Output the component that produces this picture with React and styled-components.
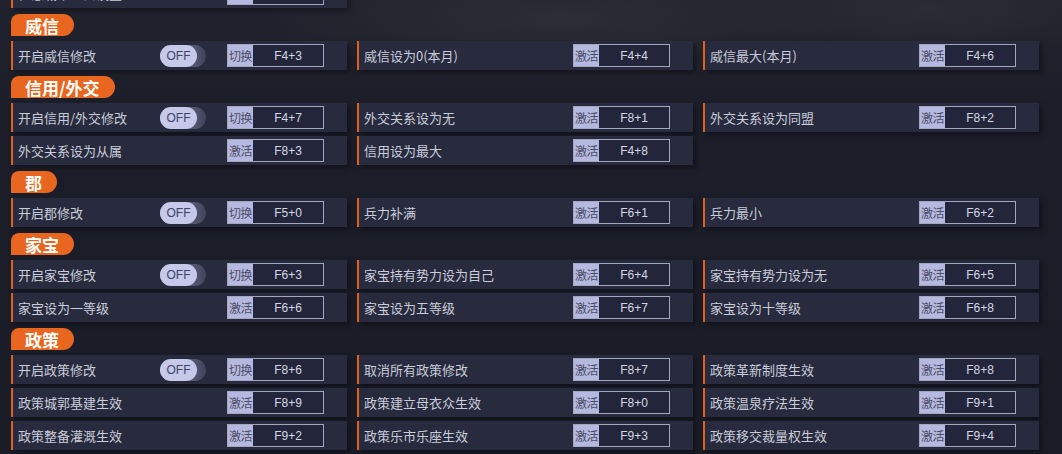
import React from "react";
import styled, { createGlobalStyle } from "styled-components";

const GlobalStyle = createGlobalStyle`
  html, body {
    margin: 0;
    padding: 0;
    background: #1b1d29;
    overflow: hidden;
  }
  body {
    font-family: "Noto Sans CJK SC", "Noto Sans", sans-serif;
    -webkit-font-smoothing: antialiased;
  }
`;

const Page = styled.div`
  width: 1062px;
  height: 454px;
  overflow: hidden;
  background:
    radial-gradient(ellipse 420px 90px at 560px 20px, rgba(70, 66, 70, 0.35), transparent 70%),
    radial-gradient(ellipse 300px 80px at 930px 10px, rgba(80, 76, 70, 0.25), transparent 70%),
    linear-gradient(180deg, #20222d 0%, #1b1d29 30%, #1a1c27 100%);
`;

/* the list is scrolled: the previous section's last row peeks in at the top */
const Scroller = styled.div`
  display: flex;
  flex-direction: column;
  gap: 6px;
  padding-left: 11px;
  margin-top: -21px;
`;

const Section = styled.section`
  display: flex;
  flex-direction: column;
  gap: 5px;
`;

const Tab = styled.div`
  align-self: flex-start;
  height: 22px;
  padding: 0 15px 0 14px;
  display: flex;
  align-items: center;
  background: #e8661f;
  border-radius: 8px 11px 11px 0;
  color: #ffffff;
  font-weight: 700;
  font-size: 17px;
  line-height: 1;
`;

const Grid = styled.div`
  display: grid;
  grid-template-columns: repeat(3, 336px);
  column-gap: 10px;
  row-gap: 4px;
`;

const Row = styled.div`
  height: 29px;
  box-sizing: border-box;
  display: flex;
  align-items: center;
  background: #282b3d;
  border-left: 2px solid #e2601d;
  padding: 0 23px 0 5px;
  box-shadow: 3px 3px 5px rgba(0, 0, 0, 0.35);
`;

const Label = styled.span`
  flex: 1;
  min-width: 0;
  color: #c9ccdb;
  font-size: 13px;
  white-space: nowrap;
  overflow: hidden;
`;

const Toggle = styled.div`
  width: 46px;
  height: 22px;
  margin-right: 21px;
  border-radius: 11px;
  background: linear-gradient(90deg, #6b6f8c 0%, #565a74 70%, #40435a 100%);
  display: flex;
  align-items: center;
`;

const Knob = styled.span`
  width: 37px;
  height: 22px;
  border-radius: 11px;
  background: #c6c9e9;
  color: #3f4566;
  font-family: "Liberation Sans", Arial, sans-serif;
  font-size: 12px;
  display: flex;
  align-items: center;
  justify-content: center;
`;

const KeyBox = styled.div`
  width: 97px;
  height: 23px;
  box-sizing: border-box;
  display: flex;
  border: 1px solid #a3a7bd;
  background: #23263a;
`;

const KeyTag = styled.span`
  width: 25px;
  background: #b5b9df;
  color: #4c4e66;
  font-size: 12px;
  display: flex;
  align-items: center;
  justify-content: center;
  letter-spacing: -0.5px;
`;

const KeyName = styled.span`
  flex: 1;
  display: flex;
  align-items: center;
  justify-content: center;
  color: #d4d6e4;
  font-family: "Liberation Sans", Arial, sans-serif;
  font-size: 12px;
`;

const Empty = styled.div`
  height: 29px;
`;

const sections = [
  {
    title: "威信",
    items: [
      { text: "开启威信修改", toggle: true, key: "F4+3" },
      { text: "威信设为0(本月)", key: "F4+4" },
      { text: "威信最大(本月)", key: "F4+6" },
    ],
  },
  {
    title: "信用/外交",
    items: [
      { text: "开启信用/外交修改", toggle: true, key: "F4+7" },
      { text: "外交关系设为无", key: "F8+1" },
      { text: "外交关系设为同盟", key: "F8+2" },
      { text: "外交关系设为从属", key: "F8+3" },
      { text: "信用设为最大", key: "F4+8" },
    ],
  },
  {
    title: "郡",
    items: [
      { text: "开启郡修改", toggle: true, key: "F5+0" },
      { text: "兵力补满", key: "F6+1" },
      { text: "兵力最小", key: "F6+2" },
    ],
  },
  {
    title: "家宝",
    items: [
      { text: "开启家宝修改", toggle: true, key: "F6+3" },
      { text: "家宝持有势力设为自己", key: "F6+4" },
      { text: "家宝持有势力设为无", key: "F6+5" },
      { text: "家宝设为一等级", key: "F6+6" },
      { text: "家宝设为五等级", key: "F6+7" },
      { text: "家宝设为十等级", key: "F6+8" },
    ],
  },
  {
    title: "政策",
    items: [
      { text: "开启政策修改", toggle: true, key: "F8+6" },
      { text: "取消所有政策修改", key: "F8+7" },
      { text: "政策革新制度生效", key: "F8+8" },
      { text: "政策城郭基建生效", key: "F8+9" },
      { text: "政策建立母衣众生效", key: "F8+0" },
      { text: "政策温泉疗法生效", key: "F9+1" },
      { text: "政策整备灌溉生效", key: "F9+2" },
      { text: "政策乐市乐座生效", key: "F9+3" },
      { text: "政策移交裁量权生效", key: "F9+4" },
    ],
  },
];

function HotkeyRow({ text, toggle, hotkey }) {
  return (
    <Row>
      <Label>{text}</Label>
      {toggle && (
        <Toggle>
          <Knob>OFF</Knob>
        </Toggle>
      )}
      <KeyBox>
        <KeyTag>{toggle ? "切换" : "激活"}</KeyTag>
        <KeyName>{hotkey}</KeyName>
      </KeyBox>
    </Row>
  );
}

export default function App() {
  return (
    <>
      <GlobalStyle />
      <Page>
        <Scroller>
          <Grid>
            <HotkeyRow text="任意城市人口设置" hotkey="F3+9" />
            <Empty />
            <Empty />
          </Grid>
          {sections.map((s) => (
            <Section key={s.title}>
              <Tab>{s.title}</Tab>
              <Grid>
                {s.items.map((it) => (
                  <HotkeyRow
                    key={it.text}
                    text={it.text}
                    toggle={it.toggle}
                    hotkey={it.key}
                  />
                ))}
              </Grid>
            </Section>
          ))}
        </Scroller>
      </Page>
    </>
  );
}
